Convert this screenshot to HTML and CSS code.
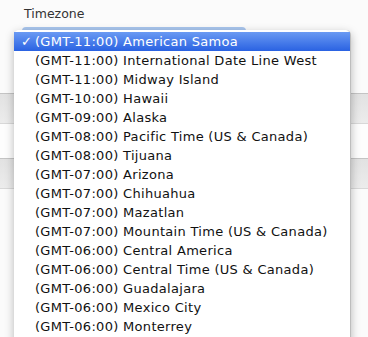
FILE: index.html
```html
<!DOCTYPE html>
<html>
<head>
<meta charset="utf-8">
<link rel="stylesheet" href="styles.css">
</head>
<body>
<div class="page">
  <div class="label">Timezone</div>
  <div class="select-ring"></div>
  <div class="bg-rows">
    <div class="bg-gap g1"></div>
    <div class="bg-field"></div>
    <div class="bg-gap g2"></div>
    <div class="bg-field"></div>
  </div>
  <ul class="menu">
    <li class="item selected"><span class="check">✓</span>(GMT-11:00) American Samoa</li>
    <li class="item"><span class="check"></span>(GMT-11:00) International Date Line West</li>
    <li class="item"><span class="check"></span>(GMT-11:00) Midway Island</li>
    <li class="item"><span class="check"></span>(GMT-10:00) Hawaii</li>
    <li class="item"><span class="check"></span>(GMT-09:00) Alaska</li>
    <li class="item"><span class="check"></span>(GMT-08:00) Pacific Time (US &amp; Canada)</li>
    <li class="item"><span class="check"></span>(GMT-08:00) Tijuana</li>
    <li class="item"><span class="check"></span>(GMT-07:00) Arizona</li>
    <li class="item"><span class="check"></span>(GMT-07:00) Chihuahua</li>
    <li class="item"><span class="check"></span>(GMT-07:00) Mazatlan</li>
    <li class="item"><span class="check"></span>(GMT-07:00) Mountain Time (US &amp; Canada)</li>
    <li class="item"><span class="check"></span>(GMT-06:00) Central America</li>
    <li class="item"><span class="check"></span>(GMT-06:00) Central Time (US &amp; Canada)</li>
    <li class="item"><span class="check"></span>(GMT-06:00) Guadalajara</li>
    <li class="item"><span class="check"></span>(GMT-06:00) Mexico City</li>
    <li class="item"><span class="check"></span>(GMT-06:00) Monterrey</li>
  </ul>
</div>
</body>
</html>
```
FILE: styles.css
```css
html, body {
  margin: 0;
  padding: 0;
  background: #ffffff;
  overflow: hidden;
}
.page {
  position: relative;
  width: 368px;
  height: 337px;
  font-family: "DejaVu Sans", "Liberation Sans", sans-serif;
  font-size: 13px;
  color: #111;
  background: #fbfbfb;
}
.label {
  padding: 6px 0 0 24px;
  height: 17px;
  font-size: 12.5px;
  color: #333;
}
.select-ring {
  margin: 4px 0 0 22px;
  width: 224px;
  height: 4px;
  border-radius: 4px 4px 0 0;
  background: #a9c6ee;
}
.bg-rows {
  margin-top: 62px;
}
.bg-field {
  height: 29px;
  border-top: 1px solid #c4c4c4;
  border-bottom: 1px solid #d8d8d8;
  background: linear-gradient(#e2e2e2, #ececec);
}
.bg-gap.g2 {
  height: 34px;
  background: #fdfdfd;
}
.menu {
  position: absolute;
  left: 14px;
  top: 30px;
  width: 337px;
  height: 320px;
  margin: 0;
  padding: 2px 0 0 0;
  list-style: none;
  background: #ffffff;
  border-radius: 5px 5px 0 0;
  border-right: 1px solid #bdbdbd;
  box-shadow: 0 3px 10px rgba(0, 0, 0, 0.28);
  box-sizing: border-box;
}
.item {
  display: flex;
  align-items: center;
  height: 19px;
  white-space: nowrap;
  letter-spacing: 0.3px;
}
.check {
  box-sizing: border-box;
  width: 21px;
  padding-left: 7px;
  flex: none;
  font-size: 13px;
  font-weight: bold;
  letter-spacing: 0;
}
.selected {
  color: #ffffff;
  background: linear-gradient(#6a9af3, #2a62e2);
}
```
